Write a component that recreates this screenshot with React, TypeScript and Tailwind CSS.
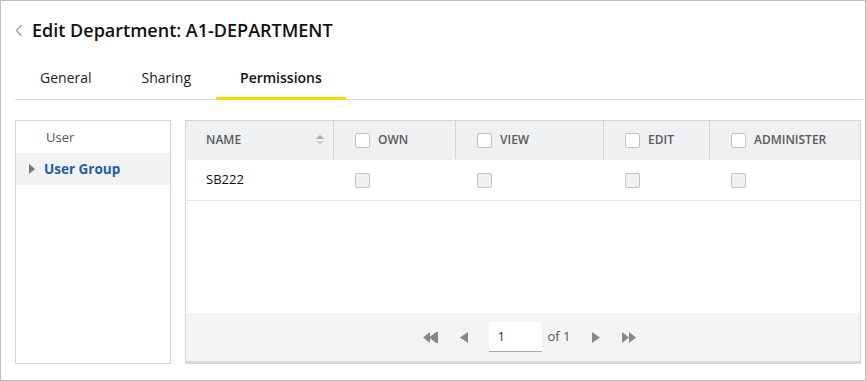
import React from "react";

const Cb = ({ filled }: { filled?: boolean }) => (
  <span
    className={`inline-block w-[15px] h-[15px] rounded-[2px] border border-[#c2c2c2] ${filled ? "bg-[#f0f0f0]" : "bg-white"}`}
  />
);

const cols = [
  { label: "OWN", w: "w-[122px]" },
  { label: "VIEW", w: "w-[148px]" },
  { label: "EDIT", w: "w-[106px]" },
  { label: "ADMINISTER", w: "flex-1" },
];

export default function App() {
  return (
    <div
      className="w-[866px] h-[381px] border border-[#bdbdbd] bg-white flex flex-col text-[#222]"
      style={{ fontFamily: '"Open Sans", "Noto Sans", sans-serif' }}
    >
      <div className="flex items-center pl-[14px] pt-[15px] h-[43px]">
        <svg width="8" height="13" viewBox="0 0 8 13" className="mr-[9px]">
          <path d="M6.5 1 L1.5 6.5 L6.5 12" fill="none" stroke="#a0a0a0" strokeWidth="1.2" />
        </svg>
        <h1 className="text-[18px] font-semibold text-[#111]">Edit Department: A1-DEPARTMENT</h1>
      </div>
      <div className="ml-[14px] mr-[2px] mt-[13px] flex border-b border-[#d9d9d9] h-[43px]">
        <div className="px-[25px] pb-[1px] flex items-center text-[14px] text-[#222]">General</div>
        <div className="px-[25px] pb-[1px] flex items-center text-[14px] text-[#222]">Sharing</div>
        <div className="px-[24px] pt-[1px] flex items-center text-[14px] font-semibold text-[#111] border-b-[3px] border-[#f7d900] mb-[-1px]">
          Permissions
        </div>
      </div>
      <div className="flex mt-[20px] ml-[14px] gap-[14px]">
        <div className="w-[156px] h-[244px] border border-[#d4d4d4] flex flex-col">
          <div className="h-[32px] pt-[1px] flex items-center pl-[30px] text-[13px] text-[#555]">User</div>
          <div className="h-[32px] flex items-center pl-[13px] bg-[#f0f2f4] text-[13.5px] font-bold text-[#1d5ea8]">
            <svg width="6" height="10" viewBox="0 0 6 10" className="mr-[9px]">
              <path d="M0 0 L6 5 L0 10 Z" fill="#777" />
            </svg>
            User Group
          </div>
        </div>
        <div className="w-[676px] h-[244px] border border-[#d4d4d4] flex flex-col">
          <div className="h-[39px] pb-[1px] bg-[#eef0f2] flex text-[12px] font-semibold text-[#5a5a5a]">
            <div className="w-[148px] border-r border-[#d4d4d4] flex items-center pl-[20px] pr-[9px] justify-between">
              <span>NAME</span>
              <svg width="8" height="10" viewBox="0 0 8 10">
                <path d="M0 4 L4 0 L8 4 Z" fill="#aaa" />
                <path d="M0 6 L4 10 L8 6 Z" fill="#d0d0d0" />
              </svg>
            </div>
            {cols.map((c, i) => (
              <div
                key={c.label}
                className={`${c.w} ${i < 3 ? "border-r border-[#d4d4d4]" : ""} flex items-center pl-[21px] gap-[8px]`}
              >
                <Cb />
                <span>{c.label}</span>
              </div>
            ))}
          </div>
          <div className="h-[41px] border-b border-[#e6e6e6] flex items-center text-[13px] text-[#111]">
            <div className="w-[148px] pl-[20px]">SB222</div>
            {cols.map((c, i) => (
              <div key={c.label} className={`${c.w} pl-[21px] flex items-center ${i < 3 ? "pr-[1px]" : ""}`}>
                <Cb filled />
              </div>
            ))}
          </div>
          <div className="flex-1" />
          <div className="h-[50px] pl-[14px] bg-[#f3f4f6] border-b-2 border-[#d8d8d8] flex items-center justify-center text-[13px] text-[#555]">
            <svg width="16" height="11" viewBox="0 0 16 11" className="mr-[21px]">
              <path d="M0 5.5 L7 0 L7 11 Z" fill="#888" />
              <path d="M6 5.5 L13 0 L13 11 Z" fill="#888" />
              <rect x="13" y="0" width="2" height="11" fill="#888" />
            </svg>
            <svg width="8" height="11" viewBox="0 0 8 11" className="mr-[21px]">
              <path d="M0 5.5 L8 0 L8 11 Z" fill="#888" />
            </svg>
            <div className="w-[53px] h-[30px] bg-white border-b border-[#a8a8a8] flex items-center pl-[8px] text-[#333]">1</div>
            <span className="ml-[5px] mr-[21px]">of 1</span>
            <svg width="8" height="11" viewBox="0 0 8 11" className="mr-[21px]">
              <path d="M8 5.5 L0 0 L0 11 Z" fill="#888" />
            </svg>
            <svg width="16" height="11" viewBox="0 0 16 11">
              <path d="M8 5.5 L1 0 L1 11 Z" fill="#888" />
              <path d="M15 5.5 L8 0 L8 11 Z" fill="#888" />
            </svg>
          </div>
        </div>
      </div>
    </div>
  );
}
